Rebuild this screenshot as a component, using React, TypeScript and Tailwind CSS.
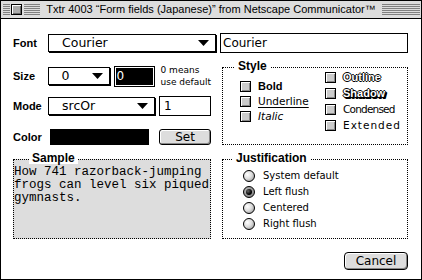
import React from 'react';

const sans = "font-['DejaVu_Sans',sans-serif]";
const bold = "font-['Liberation_Sans',sans-serif] font-bold";

function Arrow() {
  return (
    <svg width="11" height="6" viewBox="0 0 11 6" className="shrink-0">
      <path d="M0 0h11L5.5 6z" fill="#000" />
    </svg>
  );
}

function Popup({ value, className }: { value: string; className: string }) {
  return (
    <div
      className={`flex h-[18px] shrink-0 items-center border border-black bg-white pl-[13px] pr-[6px] shadow-[1px_1px_0_#000] ${className}`}
    >
      <span className={`flex-1 text-[12.5px] leading-none ${sans}`}>{value}</span>
      <Arrow />
    </div>
  );
}

function Check({ label, className = '' }: { label: string; className?: string }) {
  return (
    <div className="flex items-center">
      <span className="h-[11px] w-[11px] shrink-0 border border-black bg-[#cccccc] shadow-[inset_1px_1px_0_#fff,inset_-1px_-1px_0_#888]" />
      <span className={`ml-[7px] whitespace-nowrap text-[10.5px] leading-none ${className}`}>{label}</span>
    </div>
  );
}

function Radio({ label, on = false }: { label: string; on?: boolean }) {
  return (
    <div className="flex h-[16px] items-center">
      {on ? (
        <span className="flex h-[12px] w-[12px] items-center justify-center rounded-full border border-black bg-[radial-gradient(circle_at_35%_35%,#bbb_0,#777_100%)]">
          <span className="h-[6px] w-[6px] rounded-full bg-[radial-gradient(circle_at_35%_35%,#666_0,#000_60%)]" />
        </span>
      ) : (
        <span className="h-[12px] w-[12px] rounded-full border border-black bg-[radial-gradient(circle_at_35%_35%,#fff_0,#ddd_45%,#888_100%)]" />
      )}
      <span className={`ml-[8px] text-[10px] leading-none ${sans}`}>{label}</span>
    </div>
  );
}

function Stripes({ className = '' }: { className?: string }) {
  return (
    <div className={`h-[11px] bg-[repeating-linear-gradient(to_bottom,#808080_0px,#808080_1px,transparent_1px,transparent_2px)] ${className}`} />
  );
}

export default function App() {
  return (
    <div className="flex h-[280px] w-[422px] flex-col border border-black bg-white text-black">
      {/* title bar */}
      <div className="flex h-[18px] shrink-0 items-center border-b border-black bg-[#dddddd] px-[1px]">
        <div className="flex flex-1 basis-0 items-center">
          <Stripes className="ml-[1px] w-[7px]" />
          <span className="ml-[1px] h-[11px] w-[11px] shrink-0 border border-black bg-[#aaaaaa] shadow-[inset_1px_1px_0_#fff,inset_-1px_-1px_0_#666]" />
          <Stripes className="ml-[2px] flex-1" />
        </div>
        <span className="whitespace-nowrap px-[6px] font-['Liberation_Sans',sans-serif] text-[11px] leading-none">
          Txtr 4003 “Form fields (Japanese)” from Netscape Communicator™
        </span>
        <Stripes className="flex-1 basis-0" />
      </div>

      <div className="flex flex-1 flex-col pl-[12px] pr-[13px] pt-[14px]">
        {/* font row */}
        <div className="flex h-[20px] items-center">
          <span className={`w-[35px] text-[11px] ${bold}`}>Font</span>
          <Popup value="Courier" className="w-[168px]" />
          <div className={`ml-[4px] flex h-[20px] flex-1 items-center border border-black pl-[2px] text-[12px] ${sans}`}>
            Courier
          </div>
        </div>

        <div className="flex gap-[11px]">
          {/* left column */}
          <div className="w-[198px]">
            <div className="mt-[12px] flex h-[22px] items-center">
              <span className={`w-[35px] text-[11px] ${bold}`}>Size</span>
              <Popup value="0" className="w-[62px]" />
              <div className="ml-[4px] h-[21px] w-[41px] shrink-0 border border-black bg-white p-[1px]">
                <div className={`h-full bg-black pl-[1px] text-[12px] leading-[17px] text-white ${sans}`}>0</div>
              </div>
              <div className={`ml-[6px] whitespace-nowrap text-[9px] leading-[12px] ${sans}`}>
                0 means
                <br />
                use default
              </div>
            </div>

            <div className="mt-[9px] flex h-[20px] items-center">
              <span className={`w-[35px] text-[11px] ${bold}`}>Mode</span>
              <Popup value="srcOr" className="w-[107px]" />
              <div className={`ml-[4px] flex h-[20px] w-[52px] items-center border border-black pl-[4px] text-[12px] ${sans}`}>
                1
              </div>
            </div>

            <div className="mt-[13px] flex h-[16px] items-center">
              <span className={`w-[37px] text-[11px] ${bold}`}>Color</span>
              <div className="h-[16px] w-[99px] bg-black" />
              <button className={`ml-[10px] flex h-[16px] w-[52px] items-center justify-center rounded-[3px] border border-black bg-[#dddddd] text-[12px] leading-none shadow-[inset_1px_1px_0_#fff,inset_-1px_-1px_0_#888] ${sans}`}>
                Set
              </button>
            </div>
          </div>

          {/* style box */}
          <div className="relative mt-[14px] h-[78px] w-[186px] border border-dotted border-black">
            <span className={`absolute left-[12px] top-[-7px] bg-white px-[3px] text-[12px] leading-[11px] ${bold}`}>Style</span>
            <div className={`flex text-[10.5px] ${sans}`}>
              <div className="ml-[17px] flex w-[85px] flex-col gap-[4px] pt-[13px]">
                <Check label="Bold" className="font-['Liberation_Sans',sans-serif] font-bold text-[11px]" />
                <Check label="Underline" className="underline underline-offset-2" />
                <Check label="Italic" className="italic" />
              </div>
              <div className="flex flex-col gap-[5px] pt-[4px]">
                <Check
                  label="Outline"
                  className="font-['Liberation_Sans',sans-serif] font-bold text-[11px] text-white [text-shadow:1px_0_0_#000,-1px_0_0_#000,0_1px_0_#000,0_-1px_0_#000]"
                />
                <Check
                  label="Shadow"
                  className="font-['Liberation_Sans',sans-serif] font-bold text-[11px] text-white [text-shadow:1px_0_0_#000,-1px_0_0_#000,0_1px_0_#000,0_-1px_0_#000,2px_2px_0_#000,1px_2px_0_#000,2px_1px_0_#000]"
                />
                <Check label="Condensed" className="tracking-[-0.8px]" />
                <Check label="Extended" className="tracking-[1px]" />
              </div>
            </div>
          </div>
        </div>

        <div className="mt-[14px] flex gap-[11px]">
          {/* sample */}
          <div className="relative h-[80px] w-[198px] border border-dotted border-black bg-[#dddddd]">
            <span className={`absolute left-[15px] top-[-7px] bg-white px-[3px] text-[12px] leading-[11px] ${bold}`}>Sample</span>
            <p className="whitespace-pre pt-[6px] font-['Liberation_Mono',monospace] text-[12.5px] leading-[13px]">
              {'How 741 razorback-jumping\nfrogs can level six piqued\ngymnasts.'}
            </p>
          </div>

          {/* justification */}
          <div className="relative h-[80px] w-[186px] border border-dotted border-black">
            <span className={`absolute left-[10px] top-[-7px] bg-white px-[3px] text-[12px] leading-[11px] ${bold}`}>Justification</span>
            <div className="ml-[20px] pt-[8px]">
              <Radio label="System default" />
              <Radio label="Left flush" on />
              <Radio label="Centered" />
              <Radio label="Right flush" />
            </div>
          </div>
        </div>

        <div className="mt-[13px] flex justify-end">
          <button className={`flex h-[18px] w-[64px] items-center justify-center rounded-[4px] border border-black bg-[#dddddd] text-[12px] leading-none shadow-[inset_1px_1px_0_#fff,inset_-1px_-1px_0_#888] ${sans}`}>
            Cancel
          </button>
        </div>
      </div>
    </div>
  );
}
